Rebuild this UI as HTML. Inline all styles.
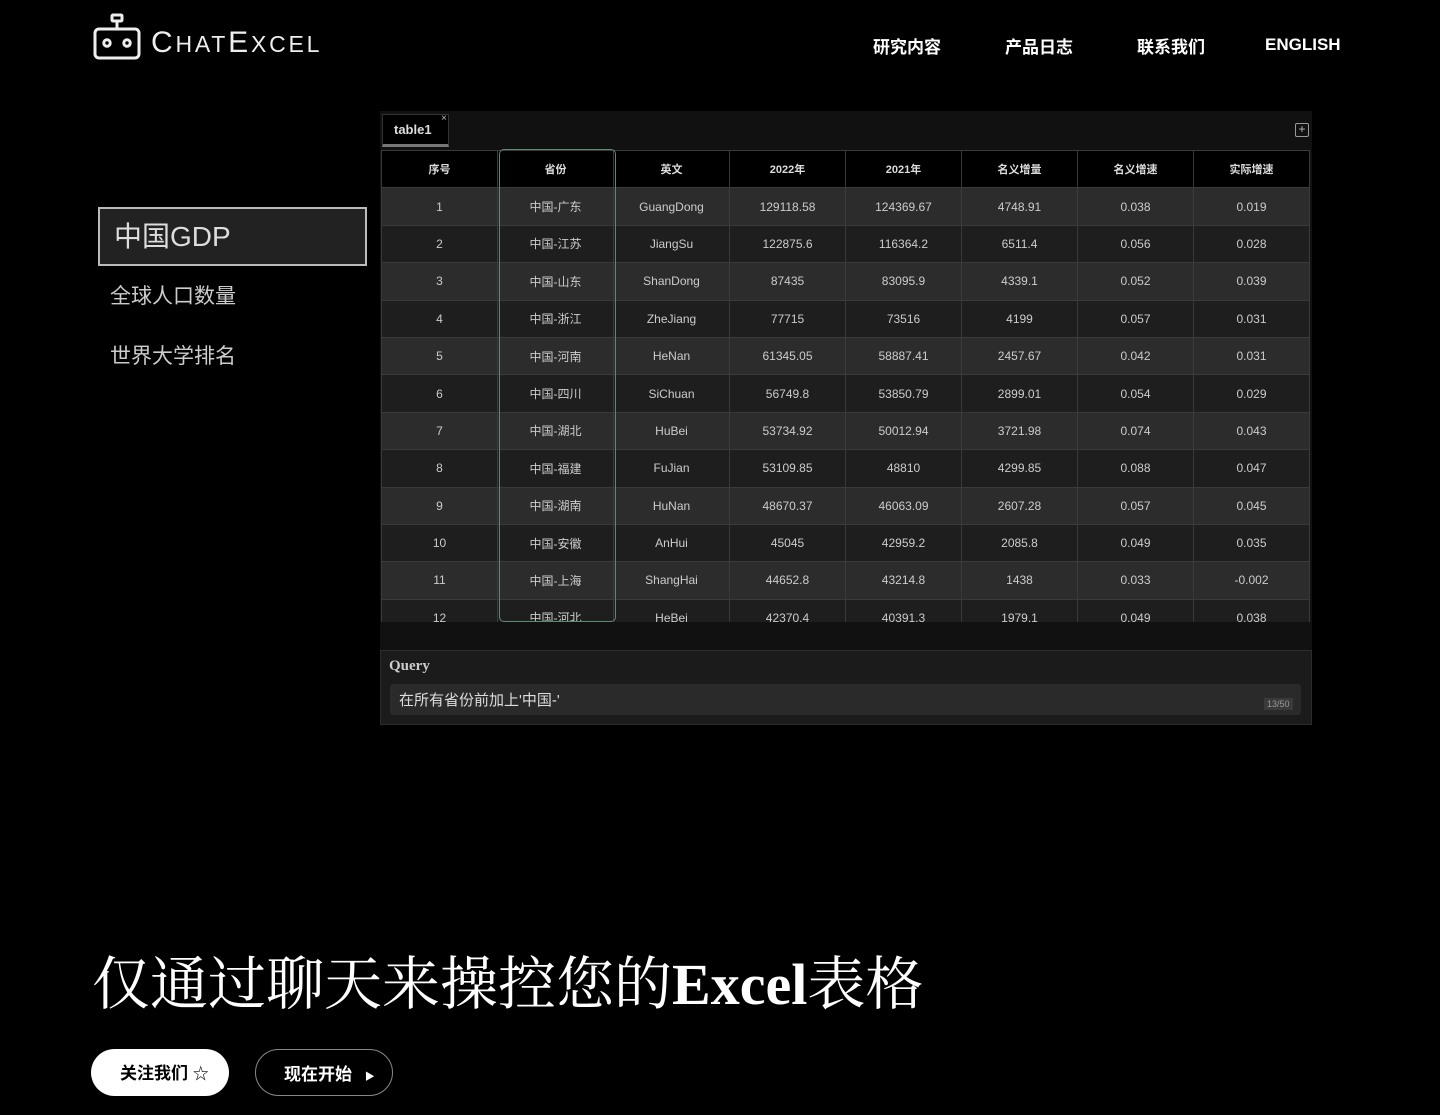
<!DOCTYPE html>
<html><head><meta charset="utf-8">
<style>
*{margin:0;padding:0;box-sizing:border-box}
body{width:1440px;height:1115px;background:#000;color:#fff;font-family:"Liberation Sans","Noto Sans CJK SC",sans-serif;position:relative;overflow:hidden}
.abs{position:absolute}
.nav{top:33px;font-size:17px;font-weight:bold;color:#fff}
.logo{left:151px;top:26px;font-family:"Liberation Sans",sans-serif;font-size:30px;letter-spacing:2.8px;color:#eee;white-space:nowrap}
.logo small{font-size:23px}
.side{left:98px;top:207px;width:269px;height:59px;border:2px solid #bbb;background:#222;font-size:28px;color:#ddd;padding:6px 0 0 14px}
.si{left:110px;font-size:21px;color:#ccc}
.panel{left:380px;top:111px;width:932px;height:614px;background:#111}
.tab{left:382px;top:114px;width:67px;height:33px;background:#000;border:1px solid #333;border-bottom:3px solid #777;font-size:13px;font-weight:bold;color:#ddd;padding:7px 0 0 11px}
.tw{position:absolute;left:381px;top:150px;width:929px;height:472px;overflow:hidden}
table{position:absolute;left:0;top:0;border-collapse:collapse;table-layout:fixed;width:929px}
td,th{width:116px;text-align:center;border:1px solid #3a3a3a;font-size:12px;color:#ccc;height:37.4px}
th{background:#000;color:#ddd;font-weight:bold;font-size:11px}
tr:nth-child(even) td{background:#2c2c2c}
tr:nth-child(odd) td{background:#1e1e1e}
</style></head><body>
<svg class="abs" style="left:92px;top:13px" width="50" height="48" viewBox="0 0 50 48" fill="none" stroke="#eee" stroke-width="3">
<rect x="20" y="2" width="10" height="6" rx="1"/><line x1="25" y1="8" x2="25" y2="16"/>
<rect x="3" y="16" width="44" height="29" rx="4"/>
<circle cx="15" cy="30" r="3.2"/><circle cx="35" cy="30" r="3.2"/>
</svg>
<div class="abs logo">C<small>HAT</small>E<small>XCEL</small></div>
<div class="abs nav" style="left:873px">研究内容</div>
<div class="abs nav" style="left:1005px">产品日志</div>
<div class="abs nav" style="left:1137px">联系我们</div>
<div class="abs nav" style="left:1265px;top:35px">ENGLISH</div>

<div class="abs side">中国GDP</div>
<div class="abs si" style="top:280px">全球人口数量</div>
<div class="abs si" style="top:340px">世界大学排名</div>

<div class="abs panel"></div>
<div class="abs tab">table1</div>
<div class="abs" style="left:441px;top:113px;font-size:10px;color:#bbb">×</div>
<div class="abs" style="left:1295px;top:123px;width:14px;height:14px;border:1px solid #999;border-radius:2px;font-size:12px;line-height:11px;text-align:center;color:#bbb">+</div>
<div class="tw"><table>
<tr><th>序号</th><th>省份</th><th>英文</th><th>2022年</th><th>2021年</th><th>名义增量</th><th>名义增速</th><th>实际增速</th></tr>
<tr><td>1</td><td>中国-广东</td><td>GuangDong</td><td>129118.58</td><td>124369.67</td><td>4748.91</td><td>0.038</td><td>0.019</td></tr>
<tr><td>2</td><td>中国-江苏</td><td>JiangSu</td><td>122875.6</td><td>116364.2</td><td>6511.4</td><td>0.056</td><td>0.028</td></tr>
<tr><td>3</td><td>中国-山东</td><td>ShanDong</td><td>87435</td><td>83095.9</td><td>4339.1</td><td>0.052</td><td>0.039</td></tr>
<tr><td>4</td><td>中国-浙江</td><td>ZheJiang</td><td>77715</td><td>73516</td><td>4199</td><td>0.057</td><td>0.031</td></tr>
<tr><td>5</td><td>中国-河南</td><td>HeNan</td><td>61345.05</td><td>58887.41</td><td>2457.67</td><td>0.042</td><td>0.031</td></tr>
<tr><td>6</td><td>中国-四川</td><td>SiChuan</td><td>56749.8</td><td>53850.79</td><td>2899.01</td><td>0.054</td><td>0.029</td></tr>
<tr><td>7</td><td>中国-湖北</td><td>HuBei</td><td>53734.92</td><td>50012.94</td><td>3721.98</td><td>0.074</td><td>0.043</td></tr>
<tr><td>8</td><td>中国-福建</td><td>FuJian</td><td>53109.85</td><td>48810</td><td>4299.85</td><td>0.088</td><td>0.047</td></tr>
<tr><td>9</td><td>中国-湖南</td><td>HuNan</td><td>48670.37</td><td>46063.09</td><td>2607.28</td><td>0.057</td><td>0.045</td></tr>
<tr><td>10</td><td>中国-安徽</td><td>AnHui</td><td>45045</td><td>42959.2</td><td>2085.8</td><td>0.049</td><td>0.035</td></tr>
<tr><td>11</td><td>中国-上海</td><td>ShangHai</td><td>44652.8</td><td>43214.8</td><td>1438</td><td>0.033</td><td>-0.002</td></tr>
<tr><td>12</td><td>中国-河北</td><td>HeBei</td><td>42370.4</td><td>40391.3</td><td>1979.1</td><td>0.049</td><td>0.038</td></tr>
</table></div>
<div class="abs" style="left:499px;top:149px;width:117px;height:473px;border:1px solid #5f8a70;border-radius:5px"></div>

<div class="abs" style="left:380px;top:650px;width:932px;height:75px;background:#1b1b1b;border:1px solid #2c2c2c"></div>
<div class="abs" style="left:389px;top:658px;font-family:'Liberation Serif',serif;font-weight:bold;font-size:15px;color:#ccc">Query</div>
<div class="abs" style="left:390px;top:684px;width:911px;height:31px;background:#2a2a2a;border-radius:3px"></div>
<div class="abs" style="left:399px;top:689px;font-size:15px;color:#ddd">在所有省份前加上'中国-'</div>
<div class="abs" style="left:1264px;top:698px;font-size:9px;color:#999;background:#3a3a3a;padding:1px 3px">13/50</div>

<div class="abs" style="left:92px;top:937px;font-family:'Liberation Serif','Noto Serif CJK SC',serif;font-size:58px;color:#fff;white-space:nowrap">仅通过聊天来操控您的<b>Excel</b>表格</div>

<div class="abs" style="left:91px;top:1049px;width:138px;height:47px;background:#fff;border-radius:24px;color:#000;font-weight:bold;font-size:17px;padding:10px 0 0 29px">关注我们 <span style="font-weight:normal;font-size:16px">☆</span></div>
<div class="abs" style="left:255px;top:1049px;width:138px;height:47px;border:1px solid #888;border-radius:24px;color:#fff;font-weight:bold;font-size:17px;padding:10px 0 0 28px">现在开始 <span style="font-size:10px;margin-left:8px">▶</span></div>
</body></html>
